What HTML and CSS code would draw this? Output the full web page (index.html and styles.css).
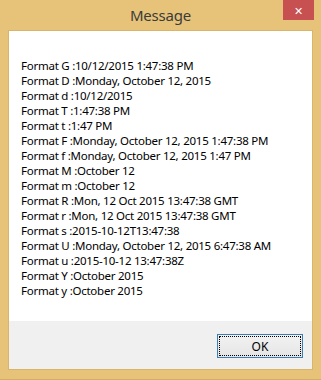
FILE: index.html
```html
<!DOCTYPE html>
<html lang="en">
<head>
    <meta charset="UTF-8">
    <title>Message</title>
    <link rel="stylesheet" href="styles.css">
</head>
<body>
    <div class="window">
        <div class="titlebar">
            <span class="title">Message</span>
            <div class="close">&#x2715;</div>
        </div>
        <div class="client">
            <div class="message">
                <div>Format G :10/12/2015 1:47:38 PM</div>
                <div>Format D :Monday, October 12, 2015</div>
                <div>Format d :10/12/2015</div>
                <div>Format T :1:47:38 PM</div>
                <div>Format t :1:47 PM</div>
                <div>Format F :Monday, October 12, 2015 1:47:38 PM</div>
                <div>Format f :Monday, October 12, 2015 1:47 PM</div>
                <div>Format M :October 12</div>
                <div>Format m :October 12</div>
                <div>Format R :Mon, 12 Oct 2015 13:47:38 GMT</div>
                <div>Format r :Mon, 12 Oct 2015 13:47:38 GMT</div>
                <div>Format s :2015-10-12T13:47:38</div>
                <div>Format U :Monday, October 12, 2015 6:47:38 AM</div>
                <div>Format u :2015-10-12 13:47:38Z</div>
                <div>Format Y :October 2015</div>
                <div>Format y :October 2015</div>
            </div>
            <div class="footer">
                <button class="ok"><span>OK</span></button>
            </div>
        </div>
    </div>
</body>
</html>
```
FILE: styles.css
```css
body {
    margin: 0;
    background-color: #e7c37a;
    font-family: "Noto Sans", "DejaVu Sans", sans-serif;
}

.window {
    height: 380px;
    box-sizing: border-box;
    display: flex;
    flex-direction: column;
    padding: 0 8px 9px 8px;
    border-bottom: 1px solid #d2ad62;
}

.titlebar {
    height: 30px;
    position: relative;
    display: flex;
    justify-content: center;
}

.title {
    font-size: 15px;
    color: #3b3b3b;
    margin-top: 5px;
    letter-spacing: -0.2px;
}

.close {
    position: absolute;
    top: 0;
    right: -1px;
    width: 31px;
    height: 20px;
    background-color: #c75050;
    color: white;
    font-size: 11px;
    font-weight: bold;
    display: flex;
    justify-content: center;
    align-items: center;
}

.client {
    flex: 1;
    display: flex;
    flex-direction: column;
    border: 1px solid #d9b56c;
    background: white;
}

.message {
    flex: 1;
    padding: 27px 0 0 12px;
    font-size: 11.5px;
    letter-spacing: -0.25px;
    line-height: 15px;
    color: #000;
}

.footer {
    height: 48px;
    background-color: #f0f0f0;
    display: flex;
    justify-content: flex-end;
    padding: 13px 9px 0 0;
    box-sizing: border-box;
}

.ok {
    width: 86px;
    height: 24px;
    padding: 1px;
    border: 1px solid #3c7fb1;
    background: linear-gradient(#f2f2f2, #e5e5e5);
    font-family: inherit;
    font-size: 12px;
    color: #000;
    display: flex;
}

.ok span {
    flex: 1;
    border: 1px dotted #000;
    display: flex;
    justify-content: center;
    align-items: center;
}
```
